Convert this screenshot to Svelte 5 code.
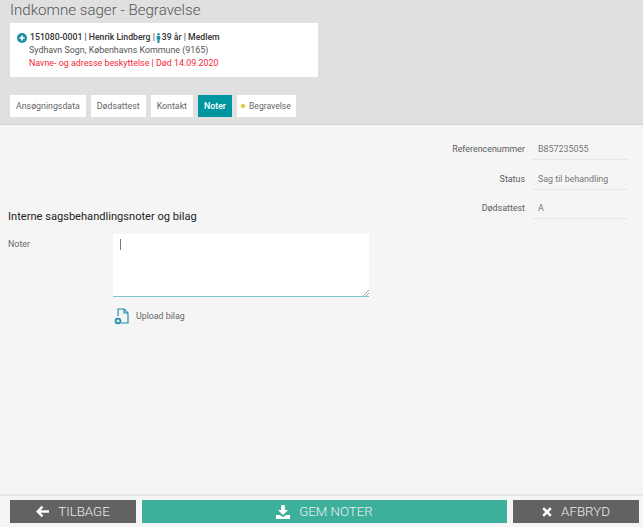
<script>
  const tabs = [
    { label: "Ansøgningsdata" },
    { label: "Dødsattest" },
    { label: "Kontakt" },
    { label: "Noter", active: true },
    { label: "Begravelse", dot: true },
  ];
  const meta = [
    ["Referencenummer", "B857235055"],
    ["Status", "Sag til behandling"],
    ["Dødsattest", "A"],
  ];
</script>

<div class="page">
  <header class="head">
    <h1>Indkomne sager - Begravelse</h1>
    <div class="card">
      <div class="line strong">
        <svg class="plus" viewBox="0 0 10 10" width="10" height="10">
          <circle cx="5" cy="5" r="5" fill="#1d8fa3" />
          <path d="M5 2.4v5.2M2.4 5h5.2" stroke="#fff" stroke-width="1.7" />
        </svg>
        <span>151080-0001 <i>|</i> Henrik Lindberg <i>|</i></span>
        <svg class="person" viewBox="0 0 5 11" width="5" height="10">
          <circle cx="2.5" cy="1.4" r="1.3" fill="#1d8fa3" />
          <path d="M.6 3.4h3.8v3.8h-.8V11H1.4V7.2H.6z" fill="#1d8fa3" />
        </svg>
        <span>39 år <i>|</i> Medlem</span>
      </div>
      <div class="line">Sydhavn Sogn, Københavns Kommune (9165)</div>
      <div class="line red">Navne- og adresse beskyttelse | Død 14.09.2020</div>
    </div>
    <nav class="tabs">
      {#each tabs as t}
        <div class="tab" class:active={t.active} class:marked={t.dot}>
          {#if t.dot}<span class="dot"></span>{/if}{t.label}
        </div>
      {/each}
    </nav>
  </header>

  <main class="content">
    <dl class="meta">
      {#each meta as [k, v]}
        <dt>{k}</dt>
        <dd>{v}</dd>
      {/each}
    </dl>
    <h2>Interne sagsbehandlingsnoter og bilag</h2>
    <div class="form">
      <div class="lbl">Noter</div>
      <div class="field">
        <div class="area">
          <span class="caret"></span>
          <svg class="grip" viewBox="0 0 7 7" width="7" height="7">
            <path d="M1 7l6-6M4 7l3-3" stroke="#8a8a8a" stroke-width="0.8" />
          </svg>
        </div>
        <div class="upload">
          <svg viewBox="0 0 16 18" width="16" height="18">
            <path d="M4 9V2h6l4 4v10H7" fill="none" stroke="#1d8fa3" stroke-width="1.2" />
            <path d="M10 2v4h4" fill="none" stroke="#1d8fa3" stroke-width="1.2" />
            <circle cx="4" cy="14" r="3.3" fill="#1d8fa3" />
            <path d="M4 12.2v3.6M2.2 14h3.6" stroke="#fff" stroke-width="1" />
          </svg>
          <span>Upload bilag</span>
        </div>
      </div>
    </div>
  </main>

  <footer class="foot">
    <button class="btn">
      <svg viewBox="0 0 12 12" width="13" height="13">
        <path d="M6 1.5L1.5 6 6 10.5M2 6h10" fill="none" stroke="#fff" stroke-width="2.2" />
      </svg>
      TILBAGE
    </button>
    <button class="btn save">
      <svg viewBox="0 0 14 14" width="14" height="14">
        <path d="M5.2 0h3.6v5H12L7 10 2 5h3.2zM0 10h3.5L7 12l3.5-2H14v4H0z" fill="#fff" />
      </svg>
      GEM NOTER
    </button>
    <button class="btn">
      <svg viewBox="0 0 10 10" width="10" height="10">
        <path d="M1.2 1.2l7.6 7.6M8.8 1.2L1.2 8.8" stroke="#fff" stroke-width="2.6" />
      </svg>
      AFBRYD
    </button>
  </footer>
</div>

<style>
  :global(body) {
    margin: 0;
    background: #f5f5f5;
    font-family: Roboto, "Liberation Sans", sans-serif;
    color: #555;
  }
  .page {
    height: 527px;
    display: flex;
    flex-direction: column;
    overflow: hidden;
  }
  .head {
    height: 124px;
    background: #e0e0e0;
    border-bottom: 1px solid #d2d2d2;
    padding: 0 10px;
    box-sizing: content-box;
  }
  h1 {
    margin: 0;
    height: 23px;
    font-size: 15.1px;
    line-height: 20px;
    font-weight: 300;
    color: #555;
  }
  .card {
    width: 308px;
    height: 54px;
    box-sizing: border-box;
    background: #fff;
    padding: 8px 7px;
    font-size: 8.9px;
    line-height: 13px;
    color: #555;
  }
  .line {
    padding-left: 12px;
    white-space: nowrap;
  }
  .strong {
    display: flex;
    align-items: center;
    gap: 1px;
    padding-left: 0;
    font-size: 8.7px;
    font-weight: 500;
    color: #333;
  }
  .strong i {
    font-style: normal;
    font-weight: 400;
  }
  .plus {
    margin-right: 2px;
  }
  .red {
    color: #f5283a;
  }
  .tabs {
    display: flex;
    gap: 5px;
    margin-top: 18px;
  }
  .tab {
    height: 22px;
    line-height: 22px;
    padding: 0 6px;
    background: #fff;
    font-size: 8.8px;
    color: #666;
    white-space: nowrap;
  }
  .tab.active {
    background: #00969f;
    color: #fff;
    font-weight: 500;
    padding: 0 6px;
  }
  .tab.marked {
    padding: 0 5px 0 4px;
    font-size: 8.6px;
  }
  .dot {
    display: inline-block;
    width: 4px;
    height: 4px;
    background: #d3cf4a;
    transform: rotate(45deg);
    margin: 0 4px 1px 0;
    vertical-align: middle;
  }
  .content {
    flex: 1;
    padding: 0 8px;
  }
  .meta {
    float: right;
    margin: 13px 7px 0 0;
    display: grid;
    grid-template-columns: auto 96px;
    grid-auto-rows: 29.5px;
    column-gap: 7px;
    font-size: 8.9px;
    line-height: 23px;
  }
  dt {
    text-align: right;
    color: #5c5c5c;
  }
  dd {
    margin: 0;
    color: #777;
    padding-left: 6px;
    border-bottom: 1px solid #e6e6e6;
    height: 21px;
  }
  h2 {
    margin: 85px 0 0;
    font-size: 11.1px;
    line-height: 14px;
    font-weight: 400;
    color: #222;
  }
  .form {
    clear: both;
    display: flex;
    margin-top: 10px;
  }
  .lbl {
    width: 105px;
    font-size: 8.9px;
    line-height: 20px;
    color: #666;
  }
  .area {
    position: relative;
    width: 256px;
    height: 63px;
    box-sizing: border-box;
    background: #fff;
    border-bottom: 1px solid #7fc6d2;
  }
  .caret {
    position: absolute;
    left: 7px;
    top: 5px;
    width: 1px;
    height: 11px;
    background: #777;
  }
  .grip {
    position: absolute;
    right: 0;
    bottom: 0;
  }
  .upload {
    display: flex;
    align-items: center;
    gap: 6px;
    margin: 10px 0 0 1px;
    font-size: 8.8px;
    color: #666;
  }
  .foot {
    height: 33px;
    box-sizing: border-box;
    border-top: 2px solid #e6e6e6;
    display: flex;
    gap: 6px;
    padding: 4px 4px 0 10px;
  }
  .btn {
    height: 23px;
    width: 126px;
    border: 0;
    background: #626262;
    color: #eee;
    font-family: Roboto, "Liberation Sans", sans-serif;
    font-size: 13.3px;
    font-weight: 300;
    display: flex;
    align-items: center;
    justify-content: center;
    gap: 9px;
    padding: 0;
  }
  .save {
    flex: 1;
    background: #3cb09b;
  }
</style>
